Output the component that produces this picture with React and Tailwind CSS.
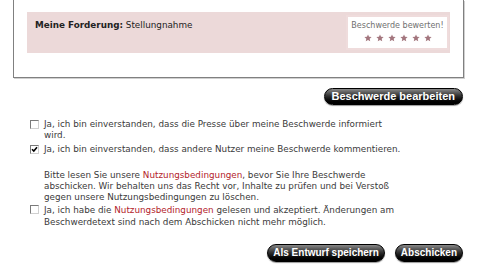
import React from 'react';

const btnBase =
  'rounded-full border border-black bg-gradient-to-b from-[#8a8a8a] via-[#2a2a2a] to-[#000] font-bold text-white [font-family:"Liberation_Sans",Arial,sans-serif] shadow-[0_1px_1px_rgba(0,0,0,0.4)]';

function Star() {
  return (
    <svg width="8" height="8" viewBox="0 0 10 10">
      <path d="M5 0.5l1.3 3 3.2.3-2.4 2.1.7 3.2L5 7.4 2.2 9.1l.7-3.2L.5 3.8l3.2-.3z" fill="#a3767e" />
    </svg>
  );
}

function Checkbox({ checked }) {
  return (
    <span className="mt-[1px] flex h-[9px] w-[9px] shrink-0 items-center justify-center border border-[#7a7a7a] border-r-[#d0d0d0] border-b-[#d0d0d0] bg-white">
      {checked && (
        <svg width="7" height="7" viewBox="0 0 7 7">
          <path d="M1 3.2l1.8 1.8L6 1.2" stroke="#000" strokeWidth="1.6" fill="none" />
        </svg>
      )}
    </span>
  );
}

export default function App() {
  return (
    <div className="h-[277px] w-[479px] bg-white text-[8.8px] leading-[11px] text-[#3a3a3a] [font-family:'DejaVu_Sans',Verdana,sans-serif]">
      <div className="ml-[13px] h-[78px] w-[451px] border-x border-b border-[#808080] pt-[12px] shadow-[1px_1px_0_#d0d0d0]">
        <div className="mx-[13px] flex h-[41px] justify-between bg-[#ecd9d9] pr-[1px] pt-[3px]">
          <div className="pl-[8px] pt-[5px] text-[#222]">
            <span className="font-bold">Meine Forderung:</span> Stellungnahme
          </div>
          <div className="flex h-[35px] w-[103px] flex-col items-center border-2 border-[#efdcdc] bg-white pt-[4px]">
            <span className="text-[8px] leading-[10px] text-[#707070]">Beschwerde bewerten!</span>
            <div className="mt-[3px] flex gap-[4px]">
              <Star />
              <Star />
              <Star />
              <Star />
              <Star />
              <Star />
            </div>
          </div>
        </div>
      </div>

      <div className="mt-[10px] flex justify-end pr-[16px]">
        <button className={`${btnBase} h-[17px] px-[7px] text-[11px] leading-[15px]`}>Beschwerde bearbeiten</button>
      </div>

      <div className="ml-[30px] mr-[67px] mt-[14px] flex flex-col">
        <div className="flex gap-[5px]">
          <Checkbox />
          <p>
            Ja, ich bin einverstanden, dass die Presse über meine Beschwerde informiert
            <br />
            wird.
          </p>
        </div>
        <div className="mt-[3px] flex gap-[5px]">
          <Checkbox checked />
          <p className="whitespace-nowrap">Ja, ich bin einverstanden, dass andere Nutzer meine Beschwerde kommentieren.</p>
        </div>
        <p className="ml-[14px] mt-[15px]">
          Bitte lesen Sie unsere <span className="text-[#b3232b]">Nutzungsbedingungen</span>, bevor Sie Ihre Beschwerde
          abschicken. Wir behalten uns das Recht vor, Inhalte zu prüfen und bei Verstoß gegen unsere
          Nutzungsbedingungen zu löschen.
        </p>
        <div className="mt-[1px] flex gap-[5px]">
          <Checkbox />
          <p className="leading-[12px]">
            Ja, ich habe die <span className="text-[#b3232b]">Nutzungsbedingungen</span> gelesen und akzeptiert. Änderungen am
            Beschwerdetext sind nach dem Abschicken nicht mehr möglich.
          </p>
        </div>
      </div>

      <div className="mt-[16px] flex justify-end gap-[10px] pr-[16px]">
        <button className={`${btnBase} h-[18px] px-[5px] text-[10px] leading-[16px]`}>Als Entwurf speichern</button>
        <button className={`${btnBase} h-[18px] px-[5px] text-[10px] leading-[16px]`}>Abschicken</button>
      </div>
    </div>
  );
}
